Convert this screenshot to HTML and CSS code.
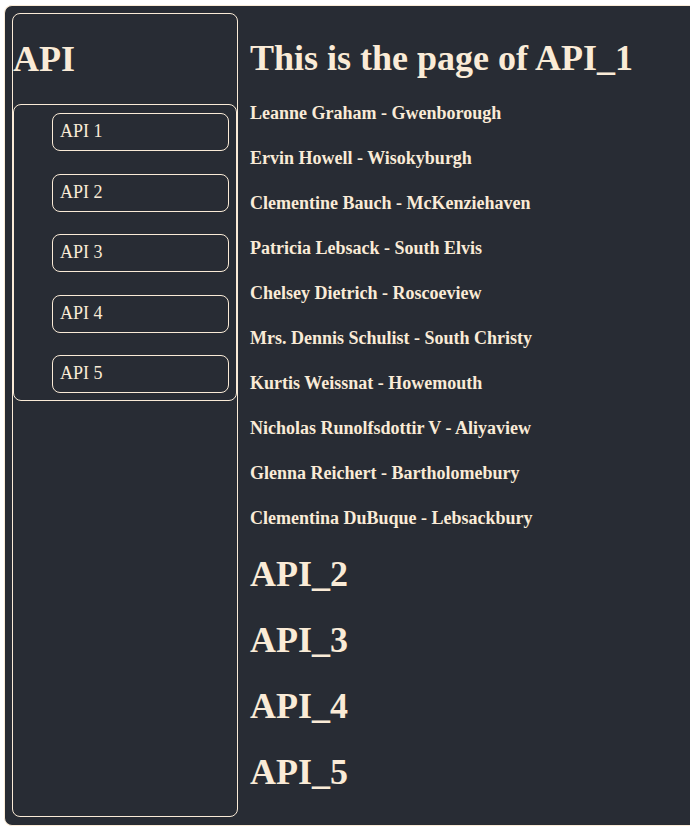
FILE: index.html
```html
<!DOCTYPE html>
<html lang="en">
<head>
<meta charset="utf-8">
<title>API</title>
<link rel="stylesheet" href="styles.css">
</head>
<body>
<div class="app">
  <nav class="sidebar">
    <h1 class="title">API</h1>
    <ul class="menu">
      <li><a class="menu-link" href="#api1">API 1</a></li>
      <li><a class="menu-link" href="#api2">API 2</a></li>
      <li><a class="menu-link" href="#api3">API 3</a></li>
      <li><a class="menu-link" href="#api4">API 4</a></li>
      <li><a class="menu-link" href="#api5">API 5</a></li>
    </ul>
  </nav>
  <main class="content">
    <section id="api1">
      <h1 class="title">This is the page of API_1</h1>
      <h4 class="person">Leanne Graham - Gwenborough</h4>
      <h4 class="person">Ervin Howell - Wisokyburgh</h4>
      <h4 class="person">Clementine Bauch - McKenziehaven</h4>
      <h4 class="person">Patricia Lebsack - South Elvis</h4>
      <h4 class="person">Chelsey Dietrich - Roscoeview</h4>
      <h4 class="person">Mrs. Dennis Schulist - South Christy</h4>
      <h4 class="person">Kurtis Weissnat - Howemouth</h4>
      <h4 class="person">Nicholas Runolfsdottir V - Aliyaview</h4>
      <h4 class="person">Glenna Reichert - Bartholomebury</h4>
      <h4 class="person">Clementina DuBuque - Lebsackbury</h4>
    </section>
    <h1 class="title" id="api2">API_2</h1>
    <h1 class="title" id="api3">API_3</h1>
    <h1 class="title" id="api4">API_4</h1>
    <h1 class="title" id="api5">API_5</h1>
  </main>
</div>
</body>
</html>
```
FILE: styles.css
```css
* {
  box-sizing: border-box;
}

body {
  margin: 5px 0 12px 4px;
  background: #ffffff;
  color: antiquewhite;
  font-family: "Liberation Serif", "Times New Roman", serif;
  font-size: 18px;
}

.app {
  display: flex;
  gap: 12px;
  padding: 7px 0 8px 7px;
  background: #282c34;
  border: 1px solid antiquewhite;
  border-right: 0;
  border-radius: 8px 0 0 8px;
}

.sidebar {
  flex: 0 0 226px;
  border: 1px solid antiquewhite;
  border-radius: 8px;
}

.title {
  margin: 24px 0;
  font-size: 36px;
  line-height: 42px;
}

.menu {
  display: flex;
  flex-direction: column;
  justify-content: space-between;
  min-height: 297px;
  margin: 0;
  padding: 8px 7px 7px 38px;
  border: 1px solid antiquewhite;
  border-radius: 8px;
  list-style: none;
}

.menu-link {
  display: block;
  padding: 7px 7px 9px;
  border: 1px solid antiquewhite;
  border-radius: 8px;
  color: inherit;
  line-height: 20px;
  text-decoration: none;
}

.content {
  flex: 1;
  min-width: 0;
}

.person {
  margin: 24px 0;
  font-size: 18px;
  line-height: 21px;
}
```
